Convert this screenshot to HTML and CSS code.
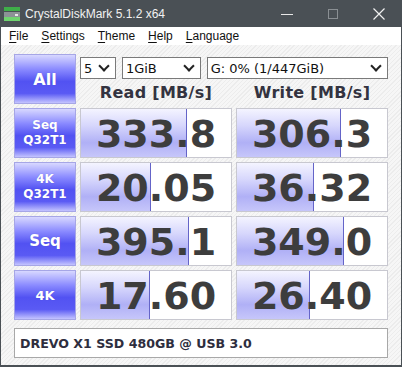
FILE: index.html
```html
<!DOCTYPE html>
<html lang="en">
<head>
    <meta charset="UTF-8">
    <title>CrystalDiskMark 5.1.2 x64</title>
    <link rel="stylesheet" href="styles.css">
</head>
<body>
    <div class="window">
        <div class="titlebar">
            <svg class="app-icon" width="18" height="16" viewBox="0 0 18 16">
                <rect x="1" y="1" width="16" height="4" fill="#3fae49"/>
                <rect x="1" y="6" width="16" height="9" fill="#8c9296"/>
                <rect x="1" y="11" width="16" height="4" fill="#6fd36f"/>
                <rect x="12" y="8" width="3" height="2" fill="#e8e8e8"/>
            </svg>
            <span class="title">CrystalDiskMark 5.1.2 x64</span>
            <div class="controls">
                <span class="ctl"><svg width="12" height="12" viewBox="0 0 12 12"><line x1="0" y1="6.5" x2="12" y2="6.5" stroke="#e8e8e8" stroke-width="1"/></svg></span>
                <span class="ctl"><svg width="12" height="12" viewBox="0 0 12 12"><rect x="1.5" y="1.5" width="9" height="9" fill="none" stroke="#8a8f93" stroke-width="1"/></svg></span>
                <span class="ctl"><svg width="12" height="12" viewBox="0 0 12 12"><path d="M0.5 0.5 L11.5 11.5 M11.5 0.5 L0.5 11.5" stroke="#f0f0f0" stroke-width="1.2"/></svg></span>
            </div>
        </div>
        <div class="menubar">
            <span><u>F</u>ile</span>
            <span><u>S</u>ettings</span>
            <span><u>T</u>heme</span>
            <span><u>H</u>elp</span>
            <span><u>L</u>anguage</span>
        </div>

        <div class="content">
            <div class="grid">
                <div class="btn btn-all">All</div>
                <div class="top">
                    <div class="combos">
                        <div class="combo c-count"><span>5</span><i class="chev"></i></div>
                        <div class="combo c-size"><span>1GiB</span><i class="chev"></i></div>
                        <div class="combo c-drive"><span>G: 0% (1/447GiB)</span><i class="chev"></i></div>
                    </div>
                    <div class="heads">
                        <div>Read [MB/s]</div>
                        <div>Write [MB/s]</div>
                    </div>
                </div>

                <div class="btn small">Seq<br>Q32T1</div>
                <div class="cell"><div class="bar" style="width: 105px"></div><span>333.8</span></div>
                <div class="cell"><div class="bar" style="width: 103px"></div><span>306.3</span></div>

                <div class="btn small">4K<br>Q32T1</div>
                <div class="cell"><div class="bar" style="width: 69px"></div><span>20.05</span></div>
                <div class="cell"><div class="bar" style="width: 76px"></div><span>36.32</span></div>

                <div class="btn">Seq</div>
                <div class="cell"><div class="bar" style="width: 107px"></div><span>395.1</span></div>
                <div class="cell"><div class="bar" style="width: 106px"></div><span>349.0</span></div>

                <div class="btn btn-4k">4K</div>
                <div class="cell"><div class="bar" style="width: 68px"></div><span>17.60</span></div>
                <div class="cell"><div class="bar" style="width: 72px"></div><span>26.40</span></div>
            </div>

            <div class="comment">DREVO X1 SSD 480GB @ USB 3.0</div>
        </div>
    </div>
</body>
</html>
```

FILE: styles.css
```css
body {
    margin: 0;
    font-family: "DejaVu Sans", Verdana, sans-serif;
}
.window {
    width: 402px;
    height: 367px;
    box-sizing: border-box;
    border: 1px solid #4a5055;
    border-top: none;
    border-bottom-width: 2px;
    background-color: #f3f3f3;
    background-image: repeating-linear-gradient(135deg, #f6f6f6 0, #f6f6f6 2px, #ececec 2px, #ececec 3px);
}
.titlebar {
    height: 27px;
    margin: 0 -1px;
    background-color: #4a5055;
    display: flex;
    align-items: center;
    color: #f2f2f2;
}
.app-icon {
    margin-left: 3px;
    margin-right: 4px;
}
.title {
    font-family: "Liberation Sans", Arial, sans-serif;
    font-size: 12px;
}
.controls {
    margin-left: auto;
    display: flex;
}
.ctl {
    width: 46px;
    display: flex;
    justify-content: center;
    align-items: center;
    height: 27px;
}
.menubar {
    height: 18px;
    background-color: #fff;
    display: flex;
    align-items: center;
    font-family: "Liberation Sans", Arial, sans-serif;
    font-size: 12px;
    color: #111;
    padding-left: 8px;
}
.menubar span {
    margin-right: 13px;
}
.menubar u {
    text-underline-offset: 2px;
}
.content {
    padding: 9px 13px 0 13px;
}
.grid {
    display: grid;
    grid-template-columns: 62px 152px 152px;
    grid-auto-rows: 50px;
    gap: 4px;
}
.btn {
    box-sizing: border-box;
    border: 1px solid #a6a6e6;
    background: linear-gradient(to bottom, #d8d8ff 0%, #8a8aff 30%, #5252f2 55%, #5a5af4 80%, #c4c4ff 100%);
    color: #fff;
    font-weight: bold;
    font-size: 15px;
    display: flex;
    align-items: center;
    justify-content: center;
    text-align: center;
    text-shadow: 0 0 1px rgba(60, 60, 160, 0.4);
}
.btn-all {
    font-size: 16px;
}
.btn.small {
    font-size: 12px;
    line-height: 15px;
}
.btn-4k {
    font-size: 13px;
}
.top {
    grid-column: 2 / 4;
    display: flex;
    flex-direction: column;
}
.combos {
    display: flex;
    gap: 6px;
    margin-top: 3px;
}
.combo {
    box-sizing: border-box;
    height: 22px;
    border: 1px solid #7a7a7a;
    background: #fff;
    display: flex;
    align-items: center;
    padding: 0 5px 0 3px;
    font-family: "DejaVu Sans", sans-serif;
    font-size: 13px;
    color: #111;
}
.combo span {
    flex: 1;
}
.c-count { width: 36px; }
.c-size { width: 79px; }
.c-drive { width: 182px; }
.chev {
    width: 6px;
    height: 6px;
    border-right: 2px solid #222;
    border-bottom: 2px solid #222;
    transform: rotate(45deg);
    margin-top: -4px;
    margin-right: 2px;
}
.heads {
    display: grid;
    grid-template-columns: 152px 152px;
    gap: 4px;
    margin-top: 4px;
}
.heads div {
    text-align: center;
    font-weight: bold;
    font-size: 16px;
    letter-spacing: 0.3px;
    color: #333340;
}
.cell {
    position: relative;
    box-sizing: border-box;
    border: 1px solid #c8c8d0;
    background: #fff;
    display: flex;
    align-items: center;
    justify-content: center;
    overflow: hidden;
}
.bar {
    position: absolute;
    left: 0;
    top: 0;
    bottom: 0;
    background: linear-gradient(to bottom, #f4f4ff 0%, #d6d6fc 35%, #b0b0f6 70%, #c6c6fa 100%);
    border-right: 1px solid #6464c8;
}
.cell span {
    position: relative;
    font-weight: bold;
    font-size: 38px;
    color: #3d3d3d;
    margin-top: 2px;
}
.comment {
    margin-top: 8px;
    width: 374px;
    height: 30px;
    box-sizing: border-box;
    border: 1px solid #a8a8a8;
    background: #fff;
    font-weight: bold;
    font-size: 12.6px;
    color: #2e2e3e;
    display: flex;
    align-items: center;
    padding-left: 5px;
}
```
